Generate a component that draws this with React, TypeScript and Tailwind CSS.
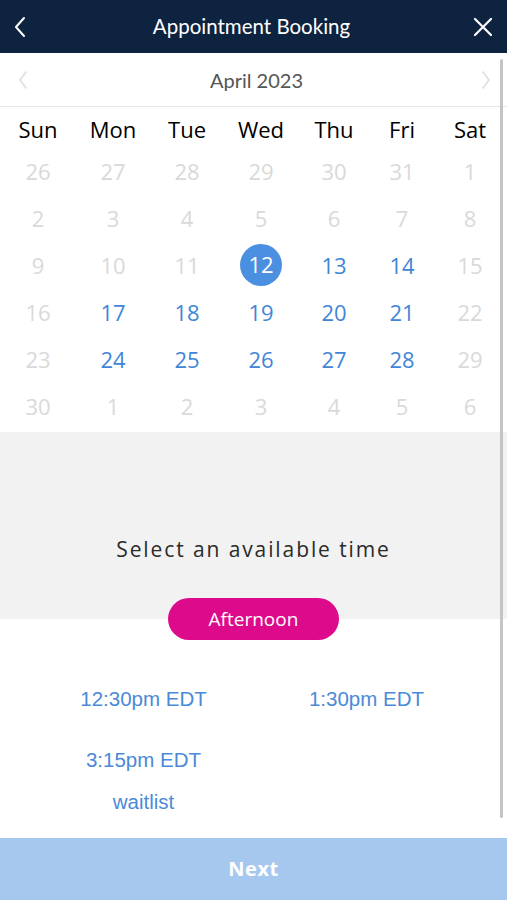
import React from "react";

const weeks: { d: number; a: boolean }[][] = [
  [26, 27, 28, 29, 30, 31, 1].map((d) => ({ d, a: false })),
  [2, 3, 4, 5, 6, 7, 8].map((d) => ({ d, a: false })),
  [9, 10, 11, 12, 13, 14, 15].map((d, i) => ({ d, a: i >= 3 && i <= 5 })),
  [16, 17, 18, 19, 20, 21, 22].map((d, i) => ({ d, a: i >= 1 && i <= 5 })),
  [23, 24, 25, 26, 27, 28, 29].map((d, i) => ({ d, a: i >= 1 && i <= 5 })),
  [30, 1, 2, 3, 4, 5, 6].map((d) => ({ d, a: false })),
];

const days = ["Sun", "Mon", "Tue", "Wed", "Thu", "Fri", "Sat"];
const cols = "grid grid-cols-[76px_74px_74px_74px_72px_64px_72px]";

export default function App() {
  return (
    <div className="relative w-[507px] h-[900px] bg-white overflow-hidden flex flex-col" style={{ fontFamily: "'Open Sans', sans-serif" }}>
      {/* header */}
      <div className="h-[53px] bg-[#0e2340] flex items-center justify-between px-[14px] shrink-0">
        <svg width="12" height="22" viewBox="0 0 12 22" fill="none">
          <path d="M10 2 L2 11 L10 20" stroke="white" strokeWidth="2" strokeLinecap="round" strokeLinejoin="round" />
        </svg>
        <div className="text-white text-[20.5px] ml-[4px]" style={{ fontFamily: "Lato, sans-serif" }}>Appointment Booking</div>
        <svg width="20" height="20" viewBox="0 0 20 20" fill="none">
          <path d="M2 2 L18 18 M18 2 L2 18" stroke="white" strokeWidth="2.2" strokeLinecap="round" />
        </svg>
      </div>

      {/* month row */}
      <div className="h-[54px] border-b border-[#e6e6e6] flex items-center justify-between pl-[18px] pr-[16px] shrink-0">
        <svg width="10" height="18" viewBox="0 0 10 18" fill="none">
          <path d="M8 1 L2 9 L8 17" stroke="#dcdcdc" strokeWidth="1.5" strokeLinecap="round" strokeLinejoin="round" />
        </svg>
        <div className="text-[#555] text-[20px] ml-[4px]" style={{ fontFamily: "Lato, sans-serif" }}>April 2023</div>
        <svg width="10" height="18" viewBox="0 0 10 18" fill="none">
          <path d="M2 1 L8 9 L2 17" stroke="#dcdcdc" strokeWidth="1.5" strokeLinecap="round" strokeLinejoin="round" />
        </svg>
      </div>

      {/* calendar */}
      <div className="pt-[5px] pb-[3px]">
        <div className={`${cols} h-[35px] items-center`}>
          {days.map((d) => (
            <div key={d} className="text-center text-[22px] text-black">{d}</div>
          ))}
        </div>
        {weeks.map((w, wi) => (
          <div key={wi} className={`${cols} h-[47px] items-center`}>
            {w.map((c, ci) => {
              const sel = wi === 2 && ci === 3;
              return (
                <div key={ci} className="flex justify-center">
                  {sel ? (
                    <div className="w-[42px] h-[42px] rounded-full bg-[#4a8fe0] text-white text-[22px] flex items-center justify-center">{c.d}</div>
                  ) : (
                    <div className={`text-[22px] leading-[42px] ${c.a ? "text-[#3f86d8]" : "text-[#d9d9d9]"}`}>{c.d}</div>
                  )}
                </div>
              );
            })}
          </div>
        ))}
      </div>

      {/* gray section */}
      <div className="relative bg-[#f2f2f2] h-[187px] shrink-0 flex flex-col items-center">
        <div className="mt-[102px] text-[21px] text-[#2a2a2a] tracking-[1.9px]">Select an available time</div>
        <div className="absolute top-[166px] left-[168px] w-[171px] h-[42px] rounded-full bg-[#dd0a8b] text-white text-[19px] flex items-center justify-center">Afternoon</div>
      </div>

      {/* times */}
      <div className="flex-1 pt-[66px] pl-[32px]" style={{ fontFamily: "'Liberation Sans', Arial, sans-serif" }}>
        <div className="grid grid-cols-[223px_223px] text-[20.5px] text-[#4a8ad8]">
          <div className="text-center h-[61px] leading-[28px]">12:30pm EDT</div>
          <div className="text-center h-[61px] leading-[28px]">1:30pm EDT</div>
          <div className="text-center h-[42px] leading-[28px]">3:15pm EDT</div>
          <div />
          <div className="text-center leading-[28px]">waitlist</div>
        </div>
      </div>

      {/* next */}
      <div className="h-[62px] bg-[#a6c8ee] shrink-0 flex items-center justify-center text-white text-[20px] font-bold tracking-[0.5px]">Next</div>

      {/* scrollbar */}
      <div className="absolute left-[500px] top-[59px] w-[3px] h-[759px] bg-[#c4c4c4] rounded-full" />
    </div>
  );
}
